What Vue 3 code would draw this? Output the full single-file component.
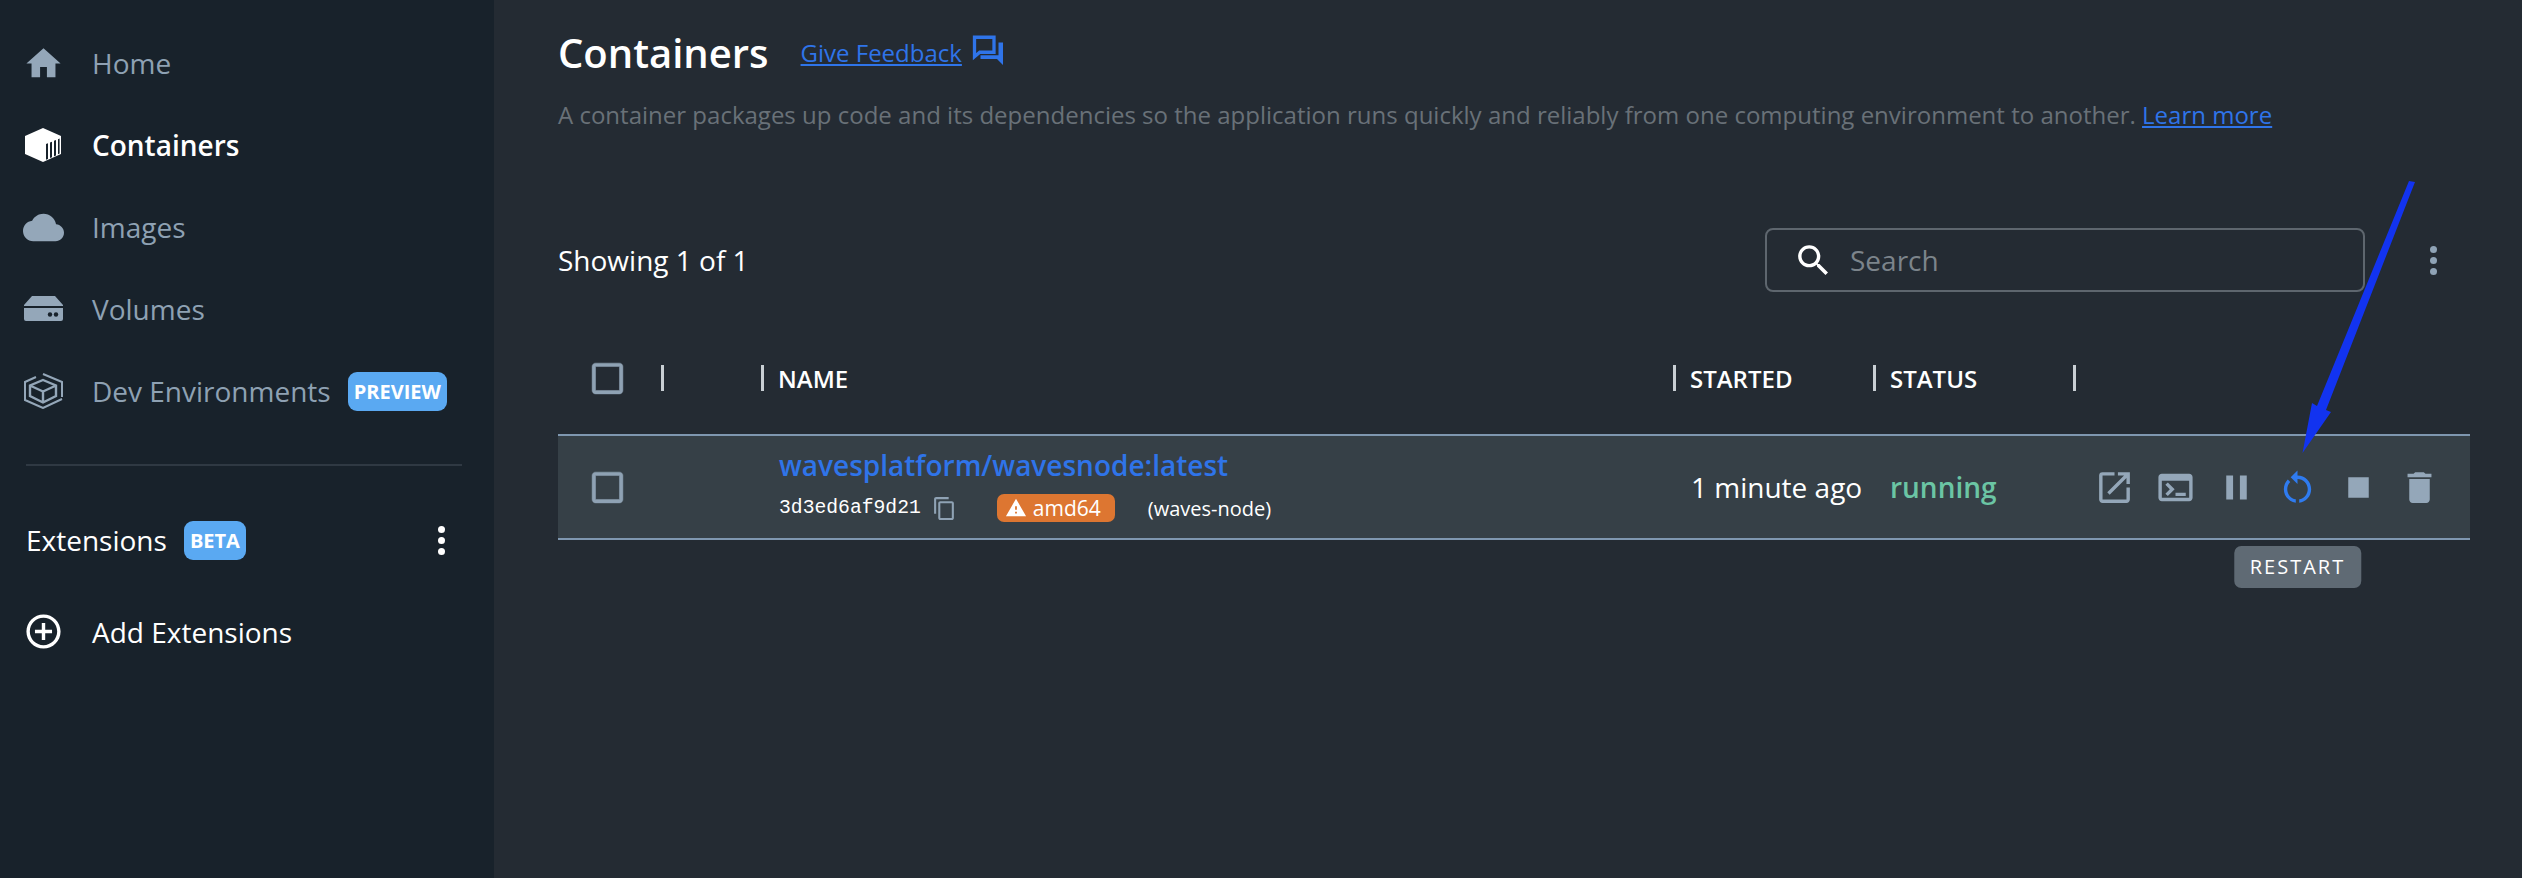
<template>
  <div class="app">
    <aside class="sidebar">
      <nav class="nav">
        <a v-for="item in navItems" :key="item.label" class="nav__item" :class="{ 'nav__item--active': item.active }">
          <span class="nav__icon">
            <svg v-if="item.label === 'Containers'" width="41" height="36" viewBox="0 0 41 36">
              <path fill="#fff" d="M20 1 L38 9 V27 L20 35 L2 27 V9 Z" />
              <path fill="#18222b" d="M23 17 l2-.8 V32 l-2 .8z M27 15.5 l2-.8 V30.2 l-2 .8z M31 13.8 l2-.8 V28.5 l-2 .8z M35 12.2 l1.6-.7 V26.6 l-1.6 .7z" />
            </svg>
            <svg v-else-if="item.label === 'Volumes'" width="41" height="26" viewBox="0 0 41 26">
              <path fill="#94a7b9" d="M9 0 H32 L40 9 V10 H1 V9 Z M1 12 H40 V23 a2 2 0 0 1-2 2 H3 a2 2 0 0 1-2-2 Z" />
              <circle cx="27" cy="18.5" r="2.2" fill="#18222b" />
              <circle cx="33" cy="18.5" r="2.2" fill="#18222b" />
            </svg>
            <svg v-else-if="item.label === 'Dev Environments'" width="41" height="36" viewBox="0 0 41 36" fill="none" stroke="#94a7b9" stroke-width="2">
              <path d="M20 1 L39 9 V24 M39 26 L20 35 L2 27 V9 L13 4" />
              <path stroke-width="2.4" d="M20 7 L33 12.5 V23 L20 29.5 L7 23 V12.5 Z M7 12.5 L20 18.5 L33 12.5 M20 18.5 V29.5" />
            </svg>
            <svg v-else width="41" height="41" viewBox="0 0 24 24" :fill="item.active ? '#fff' : '#94a7b9'"><path :d="item.path" /></svg>
          </span>
          <span class="nav__label">{{ item.label }}</span>
          <span v-if="item.badge" class="badge">{{ item.badge }}</span>
        </a>
      </nav>
      <div class="sidebar__divider"></div>
      <div class="ext-head">
        <span class="ext-head__label">Extensions</span>
        <span class="badge">BETA</span>
        <span class="dots dots--white"><i></i><i></i><i></i></span>
      </div>
      <a class="ext-add">
        <span class="nav__icon">
          <svg width="41" height="41" viewBox="0 0 24 24" fill="#fff"><path d="M13 7h-2v4H7v2h4v4h2v-4h4v-2h-4V7zm-1-5C6.48 2 2 6.48 2 12s4.48 10 10 10 10-4.48 10-10S17.52 2 12 2zm0 18c-4.41 0-8-3.59-8-8s3.59-8 8-8 8 3.59 8 8-3.59 8-8 8z" /></svg>
        </span>
        <span>Add Extensions</span>
      </a>
    </aside>

    <main class="main">
      <header class="title-row">
        <h1 class="title">Containers</h1>
        <a class="feedback">Give Feedback</a>
        <svg class="feedback__icon" width="36" height="36" viewBox="0 0 24 24" fill="none" stroke="#2f74e9" stroke-width="2.2">
          <path d="M3 3.5 H16 V13.5 H6.5 L3 16.5 Z" />
          <path fill="#2f74e9" stroke="none" d="M19 7 H22 V22 L18 18 H7 V15.5 H19 Z" />
        </svg>
      </header>
      <p class="desc">A container packages up code and its dependencies so the application runs quickly and reliably from one computing environment to another. <a class="desc__link">Learn more</a></p>

      <div class="toolbar">
        <span class="toolbar__count">Showing 1 of 1</span>
        <div class="search">
          <svg width="41" height="41" viewBox="0 0 24 24" fill="#fff"><path d="M15.5 14h-.79l-.28-.27C15.41 12.59 16 11.11 16 9.5 16 5.91 13.09 3 9.5 3S3 5.91 3 9.5 5.91 16 9.5 16c1.61 0 3.09-.59 4.23-1.57l.27.28v.79l5 4.99L20.49 19l-4.99-5zm-6 0C7.01 14 5 11.99 5 9.5S7.01 5 9.5 5 14 7.01 14 9.5 11.99 14 9.5 14z" /></svg>
          <span class="search__text">Search</span>
        </div>
        <span class="dots"><i></i><i></i><i></i></span>
      </div>

      <div class="grid grid--head">
        <div class="head-cell head-cell--check">
          <svg width="41" height="41" viewBox="0 0 24 24" fill="#8fa2b4" stroke="#8fa2b4" stroke-width="0.3"><path :d="checkPath" /></svg>
        </div>
        <div class="head-cell head-cell--sep"></div>
        <div class="head-cell head-cell--sep">NAME</div>
        <div class="head-cell head-cell--sep">STARTED</div>
        <div class="head-cell head-cell--sep">STATUS</div>
        <div class="head-cell head-cell--sep"></div>
      </div>

      <div class="grid row">
        <div class="row__check">
          <svg width="41" height="41" viewBox="0 0 24 24" fill="#8fa2b4" stroke="#8fa2b4" stroke-width="0.3"><path :d="checkPath" /></svg>
        </div>
        <div></div>
        <div class="row__name">
          <a class="row__link">wavesplatform/wavesnode:latest</a>
          <div class="row__meta">
            <span class="row__id">3d3ed6af9d21</span>
            <svg class="row__copy" width="25" height="25" viewBox="0 0 24 24" fill="#8fa2b4"><path d="M16 1H4c-1.1 0-2 .9-2 2v14h2V3h12V1zm3 4H8c-1.1 0-2 .9-2 2v14c0 1.1.9 2 2 2h11c1.1 0 2-.9 2-2V7c0-1.1-.9-2-2-2zm0 16H8V7h11v14z" /></svg>
            <span class="arch">
              <svg width="22" height="22" viewBox="0 0 24 24" fill="#fff"><path d="M1 21h22L12 2 1 21zm12-3h-2v-2h2v2zm0-4h-2v-4h2v4z" /></svg>
              amd64
            </span>
            <span class="row__alias">(waves-node)</span>
          </div>
        </div>
        <div class="row__started">1 minute ago</div>
        <div class="row__status">running</div>
        <div class="row__actions">
          <span v-for="a in actions" :key="a.name" class="action">
            <svg width="41" height="41" viewBox="0 0 24 24" :fill="a.active ? '#2f7bf0' : '#94a7b9'"><path :d="a.path" /></svg>
            <span v-if="a.active" class="tooltip">{{ a.name }}</span>
          </span>
        </div>
      </div>
    </main>

    <svg class="arrow" width="130" height="290" viewBox="0 0 130 290">
      <path fill="#1233f0" d="M116 3 L122 4 L33 232 L38 234 L9.5 275 L19 225 L24 228 Z" />
    </svg>
  </div>
</template>

<script setup>
const checkPath = 'M19 5v14H5V5h14m0-2H5c-1.1 0-2 .9-2 2v14c0 1.1.9 2 2 2h14c1.1 0 2-.9 2-2V5c0-1.1-.9-2-2-2z'

const navItems = [
  { label: 'Home', path: 'M10 20v-6h4v6h5v-8h3L12 3 2 12h3v8z' },
  { label: 'Containers', active: true },
  { label: 'Images', path: 'M19.35 10.04C18.67 6.59 15.64 4 12 4 9.11 4 6.6 5.64 5.35 8.04 2.34 8.36 0 10.91 0 14c0 3.31 2.69 6 6 6h13c2.76 0 5-2.24 5-5 0-2.64-2.05-4.78-4.65-4.96z' },
  { label: 'Volumes' },
  { label: 'Dev Environments', badge: 'PREVIEW' }
]

const actions = [
  { name: 'OPEN', path: 'M19 19H5V5h7V3H5a2 2 0 0 0-2 2v14c0 1.1.9 2 2 2h14c1.1 0 2-.9 2-2v-7h-2v7zM14 3v2h3.59l-9.83 9.83 1.41 1.41L19 6.41V10h2V3h-7z' },
  { name: 'CLI', path: 'M20 4H4c-1.1 0-2 .9-2 2v12c0 1.1.9 2 2 2h16c1.1 0 2-.9 2-2V6c0-1.1-.9-2-2-2zm0 14H4V8h16v10zM18 17h-6v-2h6v2zM7.5 17l-1.41-1.41L8.67 13l-2.59-2.59L7.5 9l4 4-4 4z' },
  { name: 'PAUSE', path: 'M6 19h4V5H6v14zm8-14v14h4V5h-4z' },
  { name: 'RESTART', active: true, path: 'M12 5V2L8 6l4 4V7c3.31 0 6 2.69 6 6 0 2.97-2.17 5.43-5 5.91v2.02c3.95-.49 7-3.85 7-7.93 0-4.42-3.58-8-8-8zm-6 8c0-1.65.67-3.15 1.76-4.24L6.34 7.34C4.9 8.79 4 10.79 4 13c0 4.08 3.05 7.44 7 7.93v-2.02c-2.83-.48-5-2.94-5-5.91z' },
  { name: 'STOP', path: 'M6 6h12v12H6z' },
  { name: 'DELETE', path: 'M6 19c0 1.1.9 2 2 2h8c1.1 0 2-.9 2-2V7H6v12zM19 4h-3.5l-1-1h-5l-1 1H5v2h14V4z' }
]
</script>

<style>
html, body {
  margin: 0;
  background: #242b33;
}
</style>

<style scoped>
.app {
  position: relative;
  display: flex;
  width: 2522px;
  height: 878px;
  overflow: hidden;
  background: #242b33;
  color: #fff;
  font-family: "Open Sans", "Liberation Sans", sans-serif;
}

.sidebar {
  width: 494px;
  flex: none;
  box-sizing: border-box;
  padding-top: 22px;
  background: #18222b;
}

.nav__item {
  display: flex;
  align-items: center;
  height: 82px;
  padding-left: 23px;
  color: #8ea1b3;
  font-size: 28px;
}

.nav__item--active {
  color: #fff;
  font-weight: 600;
}

.nav__icon {
  display: flex;
  align-items: center;
  justify-content: center;
  width: 41px;
  margin-right: 28px;
}

.badge {
  margin-left: 17px;
  padding: 0 6px;
  height: 39px;
  line-height: 39px;
  border-radius: 9px;
  background: #5aa9f2;
  color: #fff;
  font-size: 20px;
  font-weight: 700;
}

.sidebar__divider {
  height: 2px;
  margin: 32px 32px 0 26px;
  background: #2f3943;
}

.ext-head {
  display: flex;
  align-items: center;
  height: 50px;
  margin-top: 49px;
  padding: 0 49px 0 26px;
  font-size: 28px;
}

.ext-head .dots {
  margin-left: auto;
}

.ext-add {
  display: flex;
  align-items: center;
  height: 41px;
  margin-top: 46px;
  padding-left: 23px;
  font-size: 28px;
}

.dots {
  display: flex;
  flex-direction: column;
  gap: 4px;
  width: 7px;
}

.dots i {
  width: 7px;
  height: 7px;
  border-radius: 50%;
  background: #8fa3b6;
}

.dots--white i {
  background: #fff;
}

.main {
  flex: 1;
  min-width: 0;
  box-sizing: border-box;
  padding: 24px 52px 0 64px;
}

.title-row {
  display: flex;
  align-items: center;
  height: 56px;
}

.title {
  margin: 0;
  font-size: 40px;
  font-weight: 600;
}

.feedback {
  margin-left: 32px;
  color: #2f74e9;
  font-size: 24px;
  text-decoration: underline;
}

.feedback__icon {
  margin-left: 8px;
  margin-top: -4px;
}

.desc {
  margin: 0;
  margin-top: 18px;
  color: #697178;
  font-size: 24.03px;
  line-height: 34px;
  white-space: nowrap;
}

.desc__link {
  color: #2f74e9;
  text-decoration: underline;
}

.toolbar {
  display: flex;
  align-items: center;
  margin-top: 96px;
  padding-right: 33px;
  height: 64px;
}

.toolbar__count {
  font-size: 28px;
}

.search {
  display: flex;
  align-items: center;
  box-sizing: border-box;
  width: 600px;
  height: 64px;
  margin-left: auto;
  margin-right: 65px;
  padding-left: 26px;
  border: 2px solid #5e666e;
  border-radius: 8px;
}

.search__text {
  margin-left: 16px;
  color: #7c848b;
  font-size: 28px;
}

.grid {
  display: grid;
  grid-template-columns: 103px 100px 912px 200px 200px 397px;
}

.grid--head {
  align-items: center;
  height: 82px;
  margin-top: 45px;
}

.head-cell {
  display: flex;
  align-items: center;
  height: 26px;
  font-size: 24px;
  font-weight: 600;
}

.head-cell--check {
  padding-left: 29px;
}

.head-cell--sep {
  box-sizing: border-box;
  padding-left: 14px;
  border-left: 3px solid #c9cfd4;
}

.row {
  align-items: center;
  box-sizing: border-box;
  height: 106px;
  margin-top: 15px;
  border-top: 2px solid #7f97b0;
  border-bottom: 2px solid #7f97b0;
  background: #364047;
}

.row__check {
  display: flex;
  padding-left: 29px;
}

.row__name {
  padding-left: 18px;
  padding-bottom: 4px;
}

.row__link {
  display: block;
  color: #2f74e9;
  font-size: 28px;
  font-weight: 600;
  line-height: 40px;
}

.row__meta {
  display: flex;
  align-items: center;
  height: 34px;
  margin-top: 6px;
  font-size: 20px;
}

.row__id {
  font-family: "Liberation Mono", "DejaVu Sans Mono", monospace;
  font-size: 19.7px;
}

.row__copy {
  margin-left: 11px;
}

.arch {
  display: flex;
  align-items: center;
  gap: 6px;
  height: 28px;
  margin-left: 40px;
  padding: 0 14px 0 8px;
  border-radius: 7px;
  background: #dd7631;
  font-size: 21px;
  font-weight: 500;
}

.row__alias {
  margin-left: 33px;
}

.row__started {
  padding-left: 18px;
  font-size: 28px;
}

.row__status {
  padding-left: 17px;
  color: #6bc5a4;
  font-size: 28px;
  font-weight: 600;
}

.row__actions {
  display: flex;
  justify-content: flex-end;
  gap: 20px;
  padding-right: 30px;
}

.action {
  position: relative;
  display: flex;
}

.tooltip {
  position: absolute;
  top: 79px;
  left: 50%;
  transform: translateX(-50%);
  padding: 0 16px;
  height: 42px;
  line-height: 42px;
  border-radius: 7px;
  background: #5f6a74;
  color: #fff;
  font-size: 20px;
  letter-spacing: 2px;
  white-space: nowrap;
}

.arrow {
  position: absolute;
  left: 2293px;
  top: 178px;
}
</style>
